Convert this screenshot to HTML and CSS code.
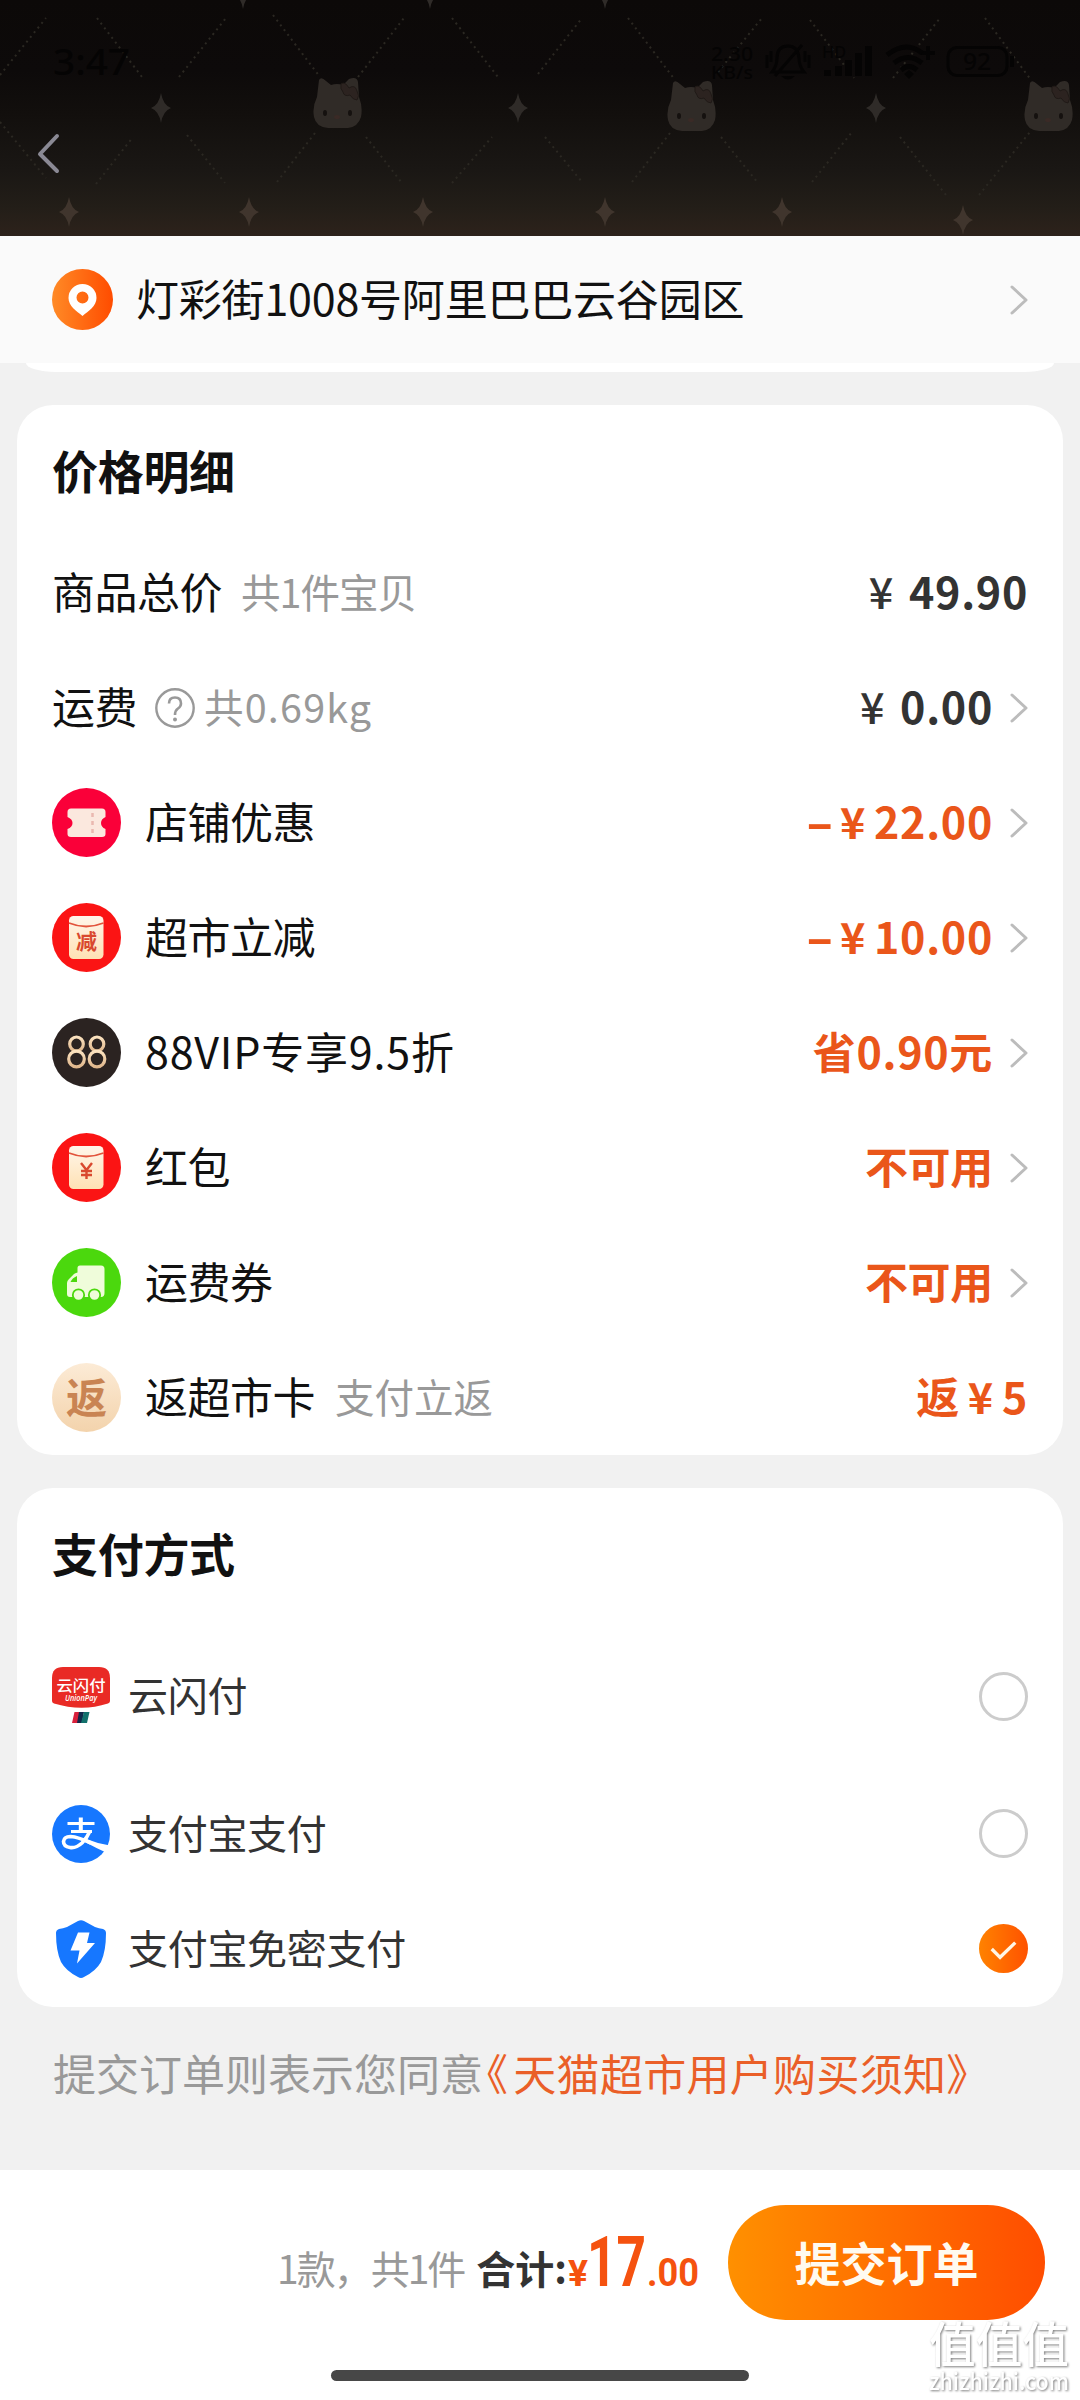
FILE: index.html
```
<!DOCTYPE html>
<html lang="zh-CN">
<head>
<meta charset="utf-8">
<title>确认订单</title>
<link rel="stylesheet" href="styles.css">
</head>
<body>
<svg class="defs" aria-hidden="true">
  <defs>
    <linearGradient id="pinFill" x1="0" x2="1"><stop offset="0" stop-color="#ff8a26"/><stop offset="1" stop-color="#ff4c00"/></linearGradient>
    <linearGradient id="checkFill" x1="0" x2="1"><stop offset="0" stop-color="#ff8200"/><stop offset="1" stop-color="#ff5200"/></linearGradient>
    <linearGradient id="cream" x1="0" y1="0" x2="0" y2="1"><stop offset="0" stop-color="#fff6ea"/><stop offset="1" stop-color="#ffe1b4"/></linearGradient>
    <linearGradient id="gold" x1="0" y1="0" x2="0" y2="1"><stop offset="0" stop-color="#fbe2bf"/><stop offset="1" stop-color="#e0b78c"/></linearGradient>
    <linearGradient id="sand" x1="0" y1="0" x2="0" y2="1"><stop offset="0" stop-color="#fcebd6"/><stop offset="1" stop-color="#f3d3ac"/></linearGradient>
    <symbol id="star" viewBox="-11 -16 22 32"><path d="M0-15Q2-3 10 0Q2 3 0 15Q-2 3-10 0Q-2-3 0-15Z"/></symbol>
    <symbol id="kitty" viewBox="0 0 50 54">
      <path fill="#302b27" d="M6 3Q8-1 13 4L18 8Q24 6 30 8L36 2Q44-1 45 5L46 20Q50 30 48 40Q45 50 35 51H15Q3 50 1 40Q-1 30 4 20Z"/>
      <path fill="#2c2320" stroke="#201a17" stroke-width="1" d="M28 7Q32 4 36 11Q42 7 44 14Q47 19 44 23Q40 23 37 18Q31 20 30 15Q27 12 28 7Z"/>
      <ellipse cx="12" cy="36" rx="2" ry="3" fill="#15110f"/><ellipse cx="37" cy="36" rx="2" ry="3" fill="#15110f"/><ellipse cx="24" cy="40" rx="3" ry="2" fill="#3a2a26"/>
    </symbol>
    <symbol id="chev" viewBox="0 0 18 30"><path d="M2 2L16 15L2 28" fill="none" stroke="#bcbcbc" stroke-width="3" stroke-linecap="round" stroke-linejoin="round"/></symbol>
  </defs>
</svg>

<div class="screen">
  <header class="header">
    <svg class="header-art" viewBox="0 0 1080 236">
      <g fill="none" stroke="#2b2822" stroke-width="2" stroke-dasharray="2 4">
        <path d="M0 75L46 18M97 18L142 77M179 77L226 18M273 15L320 77M358 77L404 18M452 18L498 77M538 74L582 18M628 18L675 80M718 72L762 18M810 20L854 78M893 78L940 18M985 18L1031 80"/>
        <path d="M0 122L46 178M96 184L133 137M187 135L225 183M277 182L315 133M366 137L402 183M452 183L492 137M545 137L582 182M632 182L670 133M721 137L758 183M812 182L852 132M900 137L946 195M979 195L1030 132"/>
      </g>
      <g fill="#2f2b28">
        <use href="#star" x="232" y="-22" width="22" height="32"/><use href="#star" x="419" y="-22" width="22" height="32"/><use href="#star" x="594" y="-22" width="22" height="32"/>
        <use href="#star" x="150" y="92" width="22" height="32"/><use href="#star" x="507" y="92" width="22" height="32"/><use href="#star" x="865" y="92" width="22" height="32"/>
      </g>
      <g fill="#40352d">
        <use href="#star" x="58" y="196" width="22" height="32"/><use href="#star" x="238" y="196" width="22" height="32"/><use href="#star" x="412" y="196" width="22" height="32"/>
        <use href="#star" x="594" y="196" width="22" height="32"/><use href="#star" x="771" y="196" width="22" height="32"/><use href="#star" x="952" y="204" width="22" height="32"/>
      </g>
      <use href="#kitty" x="313" y="77" width="50" height="54"/><use href="#kitty" x="667" y="80" width="50" height="54"/><use href="#kitty" x="1024" y="80" width="50" height="54"/>
      <g class="status">
        <text x="53" y="75" font-size="37" textLength="77" lengthAdjust="spacingAndGlyphs">3:47</text>
        <text x="711" y="61" font-size="19" textLength="42" lengthAdjust="spacingAndGlyphs">2.30</text>
        <text x="711" y="79" font-size="18" textLength="42" lengthAdjust="spacingAndGlyphs">KB/s</text>
        <text x="822" y="58" font-size="16" textLength="24" lengthAdjust="spacingAndGlyphs">HD</text>
        <text x="963" y="70" font-size="23" textLength="28" lengthAdjust="spacingAndGlyphs">92</text>
        <path d="M824 70h7v6h-7zM835 66h7v10h-7zM845 60h7v16h-7zM855 53h7v23h-7zM865 46h7v30h-7zM1010 56h4v11h-4zM781 76h14q-7 7-14 0zM904 74L909 70L914 74L909 79ZM926 46h4v5h5v4h-5v5h-4v-5h-5v-4h5z"/>
        <g fill="none" stroke="#050404" stroke-width="3">
          <path d="M772 72H804Q799 66 799 58Q798 46 788 46Q777 46 777 58Q777 66 772 72ZM802 45L775 76M767 55V68M771 51V62M809 55V68M805 51V62"/>
          <path stroke-width="5" d="M887 55Q906 40 922 53M894 63Q908 52 922 63M901 70Q909 63 917 70"/>
          <rect x="948" y="47.500" width="59" height="28" rx="9"/>
        </g>
      </g>
      <path d="M57 136L40 154L57 171" fill="none" stroke="#8a8994" stroke-width="4" stroke-linecap="round" stroke-linejoin="round"/>
    </svg>
  </header>

  <section class="address">
    <svg class="pin" viewBox="0 0 61 61"><circle cx="30.500" cy="30.500" r="30.500" fill="url(#pinFill)"/><path fill="#fff" fill-rule="evenodd" d="M30.500 15a14 14 0 0 1 14 14c0 8-8 13-14 18c-6-5-14-10-14-18a14 14 0 0 1 14-14ZM30.500 22.500a6 6 0 1 0 0 12a6 6 0 0 0 0-12Z"/></svg>
    <span class="address-text">灯彩街1008号阿里巴巴云谷园区</span>
    <svg class="chev"><use href="#chev"/></svg>
  </section>
  <div class="card-tail"></div>

  <main>
    <section class="card prices">
      <h2>价格明细</h2>
      <div class="row"><span class="label">商品总价</span><span class="note gap">共1件宝贝</span><span class="value"><i>¥</i>49.90</span></div>
      <div class="row"><span class="label">运费</span>
        <svg class="help" viewBox="0 0 40 40"><circle cx="20" cy="20" r="18.700" fill="none" stroke="#999" stroke-width="2.400"/><path d="M14 15.500Q14 9.500 20 9.500T26 15.500Q26 18.500 23 20.500Q20 22.500 20 27" fill="none" stroke="#999" stroke-width="2.600"/><circle cx="20" cy="31.500" r="2" fill="#999"/></svg>
        <span class="note wide">共0.69kg</span><span class="value"><i>¥</i>0.00</span><svg class="chev"><use href="#chev"/></svg></div>
      <div class="row">
        <svg class="icon" viewBox="0 0 69 69"><circle cx="34.500" cy="34.500" r="34.500" fill="#fa0039"/><path fill="#fbe8de" d="M19 20.500H50Q53.500 20.500 53.500 24V29Q49 31 49 35T53.500 41V46Q53.500 49 50 49H19Q15.500 49 15.500 46V41Q20.500 39 20.500 35T15.500 29V24Q15.500 20.500 19 20.500Z"/><path d="M40.500 25V46" stroke="#eab8b0" stroke-width="2.500" stroke-dasharray="4 4"/></svg>
        <span class="label">店铺优惠</span><span class="value hot"><b>–</b><i>¥</i>22.00</span><svg class="chev"><use href="#chev"/></svg></div>
      <div class="row">
        <svg class="icon" viewBox="0 0 69 69"><circle cx="34.500" cy="34.500" r="34.500" fill="#fb1414"/><rect x="17" y="13" width="34.500" height="43" rx="4.500" fill="url(#cream)"/><path d="M17 20Q34 27 51.500 20" fill="none" stroke="#e2543c" stroke-width="1.800"/><text class="cjk" x="34.500" y="46" font-size="21" fill="#d9492f">减</text></svg>
        <span class="label">超市立减</span><span class="value hot ten"><b>–</b><i>¥</i>10.00</span><svg class="chev"><use href="#chev"/></svg></div>
      <div class="row">
        <svg class="icon" viewBox="0 0 69 69"><circle cx="34.500" cy="34.500" r="34.500" fill="#2b2321"/><g fill="none" stroke="url(#gold)" stroke-width="3.200"><ellipse cx="24.500" cy="26" rx="6.800" ry="7"/><ellipse cx="24.500" cy="41" rx="7.800" ry="7.800"/><ellipse cx="45" cy="26" rx="6.800" ry="7"/><ellipse cx="45" cy="41" rx="7.800" ry="7.800"/></g></svg>
        <span class="label vip">88VIP专享9.5折</span><span class="value hot">省0.90元</span><svg class="chev"><use href="#chev"/></svg></div>
      <div class="row">
        <svg class="icon" viewBox="0 0 69 69"><circle cx="34.500" cy="34.500" r="34.500" fill="#fb1414"/><rect x="17" y="13" width="34.500" height="43" rx="4.500" fill="url(#cream)"/><path d="M17 20Q34 27 51.500 20" fill="none" stroke="#e2543c" stroke-width="1.800"/><path d="M29 30L34.500 37L40 30M34.500 37V46M29 38H40M29 42H40" fill="none" stroke="#d9492f" stroke-width="2.400"/></svg>
        <span class="label">红包</span><span class="value hot word">不可用</span><svg class="chev"><use href="#chev"/></svg></div>
      <div class="row">
        <svg class="icon" viewBox="0 0 69 69"><circle cx="34.500" cy="34.500" r="34.500" fill="#4bd80d"/><path fill="#effcda" d="M28 17.500H49Q52.500 17.500 52.500 21V45Q52.500 49 49 49H18Q15 49 15 46V35Q15 33 17 31L22 26Q23 25 25.500 24.500V20Q25.500 17.500 28 17.500Z"/><path fill="#4bd80d" d="M18.500 34Q20 30 25 28V34Z"/><g fill="#effcda" stroke="#4bd80d" stroke-width="1.800"><circle cx="26.500" cy="47" r="5.700"/><circle cx="42.500" cy="47" r="5.700"/></g></svg>
        <span class="label">运费券</span><span class="value hot word">不可用</span><svg class="chev"><use href="#chev"/></svg></div>
      <div class="row">
        <svg class="icon" viewBox="0 0 69 69"><circle cx="34.500" cy="34.500" r="34.500" fill="url(#sand)"/><text class="cjk" x="34.500" y="50" font-size="41" fill="#c98453">返</text></svg>
        <span class="label">返超市卡</span><span class="note">支付立返</span><span class="value hot">返<i class="mid">¥</i>5</span></div>
    </section>

    <section class="card payments">
      <h2>支付方式</h2>
      <div class="pay tall">
        <svg class="pay-icon" viewBox="0 0 58 58"><path fill="#e92a25" d="M11 0H47Q58 0 58 11V34Q58 35.500 56 36.500Q30 45 2 36.500Q0 35.500 0 34V11Q0 0 11 0Z"/><text class="logo" x="4.500" y="24" font-size="15" textLength="49" lengthAdjust="spacingAndGlyphs">云闪付</text><text class="union" x="13" y="34" font-size="8" textLength="32" lengthAdjust="spacingAndGlyphs">UnionPay</text><path fill="#d8213c" d="M22.500 45H28L26 56H20Z"/><path fill="#12284a" d="M27 45H32L30 56H25Z"/><path fill="#12716c" d="M32 45H37.500L35 56H29Z"/></svg>
        <span>云闪付</span><i class="radio"></i></div>
      <div class="pay">
        <svg class="pay-icon" viewBox="0 0 58 58"><circle cx="29" cy="29" r="29" fill="#1677ff"/><g fill="none" stroke="#fff"><path stroke-width="3.200" d="M15.500 18.500H42.500M19 26.500H40"/><path stroke-width="4" d="M28.800 12.500V26"/><path stroke-width="3.600" d="M38 26Q35 33 30 38Q24 43.500 18 42.500Q11.500 41.500 11.500 36.500Q12 31.500 18.500 31.500Q26 32 39 38"/></g><path fill="#fff" d="M33 33.500Q45 38.500 58 40.500L53 47Q44 43 33 37Z"/></svg>
        <span>支付宝支付</span><i class="radio"></i></div>
      <div class="pay">
        <svg class="pay-icon" viewBox="0 0 58 58"><path fill="#1677ff" d="M26 1Q29-.5 32 1L43 7Q47 8.500 51 9Q54 10 54 13Q54 31 49 42Q44 51 32 57Q29 59 26 57Q14 51 9 42Q4 31 4 13Q4 10 7 9Q11 8.500 15 7Z"/><path fill="#fff" d="M26 12.500H37.500L35 23H43L25 43.500L27.500 30.500H18.500Z"/></svg>
        <span>支付宝免密支付</span><svg class="checked" viewBox="0 0 50 50"><circle cx="25" cy="25" r="25" fill="url(#checkFill)"/><path d="M13 25.500L21.500 34L37 19" fill="none" stroke="#fff6e6" stroke-width="3.400"/></svg></div>
    </section>

    <p class="terms">提交订单则表示您同意<a><span class="lq">《</span>天猫超市用户购买须知》</a></p>
  </main>

  <footer class="footer">
    <div class="bar">
      <span class="count">1款，共1件</span><strong class="sum">合计:</strong>
      <svg class="total" viewBox="0 0 132 62"><text x="1" y="56" font-size="37" textLength="20" lengthAdjust="spacingAndGlyphs">¥</text><text x="20" y="56" font-size="70" textLength="59" lengthAdjust="spacingAndGlyphs">17</text><text x="80" y="56" font-size="39" textLength="52" lengthAdjust="spacingAndGlyphs">.00</text></svg>
      <button class="submit">提交订单</button>
    </div>
    <div class="home"></div>
    <div class="watermark"><svg viewBox="0 0 150 78"><text x="4" y="42" font-size="48" textLength="140" lengthAdjust="spacingAndGlyphs">值值值</text><text x="4" y="70" font-size="23" textLength="140" lengthAdjust="spacingAndGlyphs">zhizhizhi.com</text></svg></div>
  </footer>
</div>
</body>
</html>
```
FILE: styles.css
```
* { box-sizing: border-box; }
body {
  margin: 0;
  background: #f1f1f1;
  font-family: "Noto Sans CJK SC", "Noto Sans", sans-serif;
  color: #111;
}
svg { display: block; flex: none; }
i { font-style: normal; }
.defs { position: absolute; width: 0; height: 0; }
.screen { width: 1080px; height: 2400px; display: flex; flex-direction: column; overflow: hidden; }

.header { height: 236px; flex: none; background: linear-gradient(#0c0908 0, #0d0a0a 30%, #120f0d 48%, #1a1714 72%, #231e18 88%, #2d221b 100%); }
.header-art { width: 1080px; height: 236px; }
.status { fill: #050404; font-family: "Noto Sans", sans-serif; font-weight: 500; }

.address { height: 127px; flex: none; background: #fafafa; display: flex; align-items: center; padding: 0 52px 0 52px; }
.pin { width: 61px; height: 61px; }
.address-text { font-size: 43px; line-height: 60px; margin: -6px 0 0 23px; letter-spacing: -.2px; flex: 1; }
.chev { width: 18px; height: 30px; }
.card-tail { height: 9px; flex: none; margin: 0 26px; background: #fff; border-radius: 0 0 30px 30px / 0 0 9px 9px; }

main { flex: 1; padding: 33px 17px 0; }
.card { background: #fff; border-radius: 36px; padding: 0 35px; }
.prices { height: 1050px; }
.payments { height: 519px; margin-top: 33px; }
h2 { margin: 0; padding: 33px 0 0; height: 130px; font-size: 46px; line-height: 62px; font-weight: 700; letter-spacing: -.3px; }

.row { height: 115px; display: flex; align-items: center; line-height: 60px; }
.label { font-size: 43px; letter-spacing: -.5px; margin-top: -5px; }
.label.vip { letter-spacing: .8px; }
.icon { width: 69px; height: 69px; margin-right: 24px; }
.note { font-size: 39.5px; color: #999; margin: -4px 0 0 20px; }
.note.gap { letter-spacing: -1px; margin-left: 19px; }
.help { width: 40px; height: 40px; margin-left: 18px; }
.note.wide { margin-left: 9px; letter-spacing: 1.2px; }
.value { margin: -6px 0 0 auto; font-size: 43px; font-weight: 700; letter-spacing: .7px; color: #333; white-space: pre; }
.value i { font-weight: 500; margin-right: 15px; }
.value.hot { color: #ea561a; }
.value.hot i { font-weight: 700; margin-right: 8px; }
.value.word { letter-spacing: -.3px; }
.value b { margin-right: 8px; display: inline-block; transform: scaleX(1.12); }
.value i.mid { margin-left: 8px; }
.value + .chev { margin-left: 17px; }
.cjk { font-weight: 700; text-anchor: middle; }

.payments h2 { height: 128px; }
.pay { display: flex; align-items: center; height: 115px; font-size: 40px; color: #333; line-height: 60px; }
.pay.tall { height: 160px; }
.pay span { margin: -4px auto 0 18px; letter-spacing: -.3px; }
.pay-icon { width: 58px; height: 58px; }
.logo { fill: #fff; font-weight: 500; }
.union { fill: #fff; font-family: "Open Sans", sans-serif; font-style: italic; font-weight: 600; }
.radio { width: 49px; height: 49px; border: 3px solid #ccc; border-radius: 50%; }
.checked { width: 49px; height: 49px; }

.terms { margin: 35px 0 0 36px; font-size: 43px; line-height: 60px; color: #999; white-space: nowrap; }
.terms a { color: #ea5f28; letter-spacing: .3px; }
.lq { margin: 0 5px 0 -18px; }

.footer { height: 230px; flex: none; background: #fff; position: relative; }
.bar { height: 150px; padding: 35px 35px 0 0; display: flex; align-items: flex-start; justify-content: flex-end; }
.count, .sum { font-size: 39px; line-height: 56px; margin-top: 34px; white-space: pre; }
.count { color: #999; letter-spacing: -2px; }
.sum { color: #333; margin-left: 12px; }
.total { width: 132px; height: 62px; margin-top: 25px; overflow: visible; fill: #f5520f; font-family: Roboto, sans-serif; font-weight: 700; }
.submit { margin-left: 29px; width: 317px; height: 115px; border: 0; border-radius: 58px; padding: 0 0 4px; background: linear-gradient(90deg, #ff9000, #ff4d00); color: #fffaf0; font: 700 46px "Noto Sans CJK SC", sans-serif; }
.home { width: 418px; height: 11px; margin: 50px auto 0; border-radius: 6px; background: #474747; }
.watermark { position: absolute; right: 5px; bottom: 2px; width: 150px; height: 78px; }
.watermark svg { width: 150px; height: 78px; overflow: visible; fill: #fff; font-weight: 500; filter: drop-shadow(1.5px 1.5px 1px rgba(0,0,0,.5)); }
```
